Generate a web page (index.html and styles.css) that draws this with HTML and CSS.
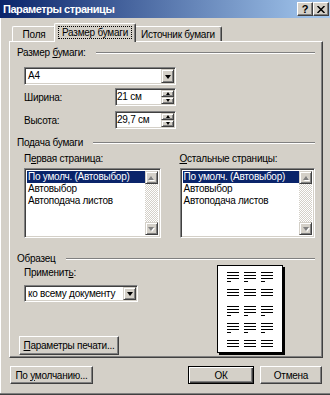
FILE: index.html
```html
<!DOCTYPE html>
<html lang="ru">
<head>
  <meta charset="UTF-8">
  <meta name="viewport" content="width=device-width, initial-scale=1.0">
  <title>Параметры страницы</title>
  <link rel="stylesheet" href="styles.css">
</head>
<body>
  <div class="window">
    <div class="titlebar">
      <span class="title">Параметры страницы</span>
      <div class="title-buttons">
        <span class="tbtn help">?</span>
        <span class="tbtn"><svg width="8" height="7" viewBox="0 0 8 7"><path d="M0.5 0 7.5 7M7.5 0 0.5 7" stroke="#000" stroke-width="1.5"/></svg></span>
      </div>
    </div>

    <div class="tabs">
      <div class="tab first">Поля</div>
      <div class="tab active"><span class="focus">Размер бумаги</span></div>
      <div class="tab last">Источник бумаги</div>
    </div>

    <div class="panel">
      <div class="group-head"><span>Размер <u>б</u>умаги:</span><i class="rule"></i></div>
      <div class="group-body">
        <div class="combo size">
          <span class="value">A4</span>
          <span class="drop"><i class="arrow"></i></span>
        </div>
        <div class="field-row">
          <span class="field-label">Ширина:</span>
          <div class="spin">
            <span class="value">21 см</span>
            <span class="spin-btns"><b class="sp"><i class="tiny up"></i></b><b class="sp"><i class="tiny down"></i></b></span>
          </div>
        </div>
        <div class="field-row second">
          <span class="field-label">Высота:</span>
          <div class="spin">
            <span class="value">29,7 см</span>
            <span class="spin-btns"><b class="sp"><i class="tiny up"></i></b><b class="sp"><i class="tiny down"></i></b></span>
          </div>
        </div>
      </div>

      <div class="group-head feed"><span>Подача бумаги</span><i class="rule"></i></div>
      <div class="group-body columns">
        <div class="col-box left">
          <div class="caption">П<u>е</u>рвая страница:</div>
          <div class="listbox">
            <ul class="items">
              <li class="sel">По умолч. (Автовыбор)</li>
              <li>Автовыбор</li>
              <li>Автоподача листов</li>
            </ul>
            <div class="vscroll">
              <span class="sbtn"><i class="tri up"></i></span>
              <span class="track"></span>
              <span class="sbtn"><i class="tri down"></i></span>
            </div>
          </div>
        </div>
        <div class="col-box right">
          <div class="caption"><u>О</u>стальные страницы:</div>
          <div class="listbox">
            <ul class="items">
              <li class="sel">По умолч. (Автовыбор)</li>
              <li>Автовыбор</li>
              <li>Автоподача листов</li>
            </ul>
            <div class="vscroll">
              <span class="sbtn"><i class="tri up"></i></span>
              <span class="track"></span>
              <span class="sbtn"><i class="tri down"></i></span>
            </div>
          </div>
        </div>
      </div>

      <div class="group-head sample"><span>Образец</span><i class="rule"></i></div>
      <div class="group-body preview-row">
        <div class="apply">
          <div class="caption">Применит<u>ь</u>:</div>
          <div class="combo apply-to">
            <span class="value">ко всему документу</span>
            <span class="drop"><i class="arrow"></i></span>
          </div>
          <button class="btn print"><u>П</u>араметры печати...</button>
        </div>
        <div class="page">
          <div class="para"><i class="col tail"></i><i class="col tail"></i><i class="col tail"></i></div>
          <div class="para"><i class="col"></i><i class="col"></i><i class="col"></i></div>
          <div class="para"><i class="col tail"></i><i class="col tail"></i><i class="col tail"></i></div>
          <div class="para"><i class="col tail"></i><i class="col tail"></i><i class="col tail"></i></div>
          <div class="para"><i class="col"></i><i class="col"></i><i class="col"></i></div>
        </div>
      </div>
    </div>

    <div class="actions">
      <button class="btn defaults">По <u>у</u>молчанию...</button>
      <button class="btn ok">ОК</button>
      <button class="btn cancel">Отмена</button>
    </div>
  </div>
</body>
</html>
```

FILE: styles.css
```css
body {
  margin: 0;
  background: #d4d0c8;
  font-family: 'Liberation Sans', Arial, sans-serif;
  font-size: 10px;
  letter-spacing: -0.25px;
  color: #000;
}
.window {
  width: 330px;
  height: 395px;
  box-sizing: border-box;
  background: #d4d0c8;
  border-bottom: 1px solid #404040;
  box-shadow: inset 0 -1px #808080, inset 1px 0 #fff;
  overflow: hidden;
}
.titlebar {
  height: 18px;
  display: flex;
  align-items: center;
  justify-content: space-between;
  padding: 0 1px 0 3px;
  background: linear-gradient(to right, #0a246a, #a6caf0);
}
.title {
  color: #fff;
  font-weight: bold;
  font-size: 11px;
  letter-spacing: -0.45px;
}
.title-buttons {
  display: flex;
}
.tbtn {
  width: 16px;
  height: 14px;
  box-sizing: border-box;
  display: flex;
  align-items: center;
  justify-content: center;
  background: #d4d0c8;
  border-top: 1px solid #fff;
  border-left: 1px solid #fff;
  border-right: 1px solid #404040;
  border-bottom: 1px solid #404040;
  box-shadow: inset -1px -1px #808080;
}
.tbtn.help {
  font-weight: bold;
  font-size: 11px;
  line-height: 12px;
}
.tabs {
  height: 23px;
  display: flex;
  align-items: flex-end;
  padding-left: 12px;
}
.tab {
  height: 15px;
  box-sizing: border-box;
  background: #d4d0c8;
  border-top: 1px solid #fff;
  border-left: 1px solid #fff;
  border-right: 1px solid #404040;
  box-shadow: inset -1px 0 #808080;
  border-radius: 2px 2px 0 0;
  display: flex;
  align-items: center;
  justify-content: center;
}
.tab.first {
  width: 44px;
}
.tab.last {
  width: 88px;
  margin-left: -2px;
}
.tab.active {
  width: 82px;
  height: 19px;
  margin-left: -2px;
  margin-bottom: -1px;
  position: relative;
  z-index: 1;
  padding-bottom: 2px;
}
.focus {
  outline: 1px dotted #000;
  outline-offset: 1px;
  padding: 0 2px;
  line-height: 9px;
}
.panel {
  margin-left: 9px;
  width: 314px;
  height: 317px;
  box-sizing: border-box;
  border-top: 1px solid #fff;
  border-left: 1px solid #fff;
  border-right: 1px solid #404040;
  border-bottom: 1px solid #404040;
  box-shadow: inset -1px -1px #808080;
  padding: 5px 7px 0;
}
.group-head {
  display: flex;
  align-items: center;
  height: 12px;
  line-height: 12px;
}
.group-head.feed {
  margin-top: 8px;
}
.group-head.sample {
  margin-top: 15px;
}
.rule {
  flex: 1;
  height: 1px;
  background: #808080;
  border-bottom: 1px solid #fff;
  margin-left: 10px;
}
.group-body {
  padding-left: 7px;
}
u {
  text-decoration-thickness: 1px;
  text-underline-offset: 1px;
}
/* sunken fields */
.combo, .spin, .listbox {
  box-sizing: border-box;
  background: #fff;
  border-top: 1px solid #808080;
  border-left: 1px solid #808080;
  border-right: 1px solid #fff;
  border-bottom: 1px solid #fff;
  box-shadow: inset 1px 1px #404040, inset -1px -1px #d4d0c8;
  display: flex;
  padding: 1px;
}
.combo.size {
  margin-top: 8px;
  width: 152px;
  height: 18px;
}
.combo.apply-to {
  margin-top: 6px;
  width: 114px;
  height: 17px;
}
.value {
  flex: 1;
  line-height: 14px;
  padding-left: 2px;
  white-space: nowrap;
}
.combo.apply-to .value {
  line-height: 13px;
}
.drop, .sbtn, .sp {
  box-sizing: border-box;
  background: #d4d0c8;
  border-top: 1px solid #d4d0c8;
  border-left: 1px solid #d4d0c8;
  border-right: 1px solid #404040;
  border-bottom: 1px solid #404040;
  box-shadow: inset 1px 1px #fff, inset -1px -1px #808080;
  display: flex;
  align-items: center;
  justify-content: center;
}
.drop {
  width: 13px;
}
.arrow {
  width: 0;
  height: 0;
  border-left: 3.5px solid transparent;
  border-right: 3.5px solid transparent;
  border-top: 4px solid #000;
  margin-top: 1px;
}
.field-row {
  display: flex;
  align-items: center;
  margin-top: 3px;
}
.field-row.second {
  margin-top: 5px;
}
.field-label {
  width: 91px;
}
.spin {
  width: 61px;
  height: 18px;
}
.spin .value {
  padding-left: 0;
}
.spin-btns {
  width: 13px;
  display: flex;
  flex-direction: column;
}
.sp {
  flex: 1;
}
.tiny {
  width: 0;
  height: 0;
  border-left: 2.5px solid transparent;
  border-right: 2.5px solid transparent;
}
.tiny.up {
  border-bottom: 3px solid #000;
}
.tiny.down {
  border-top: 3px solid #000;
}
.columns {
  display: flex;
  margin-top: 4px;
}
.col-box.left {
  width: 137px;
}
.col-box.right {
  width: 136px;
  margin-left: 19px;
}
.caption {
  line-height: 12px;
}
.listbox {
  margin-top: 3px;
  height: 70px;
  padding: 2px;
}
.items {
  list-style: none;
  margin: 0;
  padding: 0;
  flex: 1;
  overflow: hidden;
}
.items li {
  height: 12px;
  line-height: 12px;
  padding-left: 1px;
  white-space: nowrap;
}
.items li.sel {
  background: #0a246a;
  color: #fff;
}
.vscroll {
  width: 13px;
  display: flex;
  flex-direction: column;
}
.sbtn {
  height: 13px;
}
.track {
  flex: 1;
  background: repeating-conic-gradient(#fff 0 25%, #d4d0c8 0 50%) 0 0 / 2px 2px;
}
.tri {
  width: 0;
  height: 0;
  border-left: 3.5px solid transparent;
  border-right: 3.5px solid transparent;
  filter: drop-shadow(1px 1px 0 #fff);
}
.tri.up {
  border-bottom: 4px solid #808080;
}
.tri.down {
  border-top: 4px solid #808080;
}
.preview-row {
  display: flex;
}
.apply {
  width: 193px;
}
.apply .caption {
  margin-top: 2px;
}
.btn {
  font-family: inherit;
  font-size: 10px;
  letter-spacing: inherit;
  color: #000;
  padding: 0;
  box-sizing: border-box;
  background: #d4d0c8;
  border-top: 1px solid #fff;
  border-left: 1px solid #fff;
  border-right: 1px solid #404040;
  border-bottom: 1px solid #404040;
  box-shadow: inset -1px -1px #808080;
  height: 18px;
  white-space: nowrap;
}
.btn.print {
  display: block;
  margin-top: 34px;
  margin-left: -5px;
  width: 100px;
  height: 19px;
}
.page {
  width: 66px;
  height: 88px;
  box-sizing: border-box;
  background: #fff;
  border: 1px solid #000;
  box-shadow: 2px 2px 0 #000;
  padding: 6px 9px 0;
  overflow: hidden;
}
.para {
  display: grid;
  grid-template-columns: repeat(3, 12px);
  column-gap: 5px;
  height: 17px;
}
.col {
  display: block;
  height: 9px;
  background: repeating-linear-gradient(#000 0 1px, transparent 1px 3px);
}
.col.tail::after {
  content: "";
  display: block;
  width: 4px;
  height: 1px;
  background: #000;
  position: relative;
  top: 9px;
}
.actions {
  display: flex;
  margin-top: 8px;
  padding-left: 10px;
}
.btn.defaults {
  width: 83px;
}
.btn.ok {
  width: 66px;
  margin-left: 95px;
  border: 1px solid #000;
  box-shadow: inset 1px 1px #fff, inset -1px -1px #404040, inset -2px -2px #808080;
}
.btn.cancel {
  width: 62px;
  margin-left: 6px;
}
```
